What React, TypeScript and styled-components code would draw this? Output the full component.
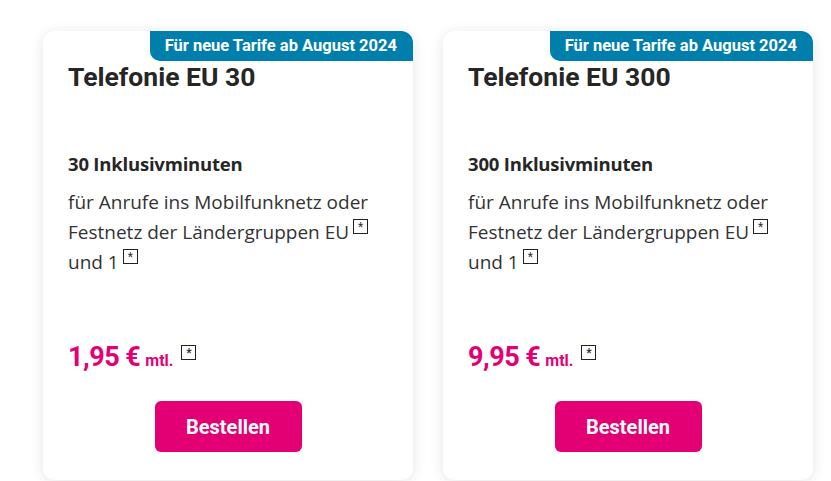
import React from 'react';
import styled, { createGlobalStyle } from 'styled-components';

const GlobalStyle = createGlobalStyle`
  body {
    margin: 0;
    background: #ffffff;
    font-family: Roboto, "Liberation Sans", sans-serif;
    color: #262626;
  }
`;

const Page = styled.div`
  display: flex;
  gap: 30px;
  padding: 31px 0 0 43px;
  height: 481px;
  box-sizing: border-box;
  overflow: hidden;
`;

const Card = styled.div`
  width: 370px;
  height: 449px;
  box-sizing: border-box;
  background: #fff;
  border-radius: 12px;
  box-shadow: 0 2px 14px rgba(0, 0, 0, 0.1);
  display: flex;
  flex-direction: column;
  padding: 0 0 28px 0;
`;

const Badge = styled.div`
  align-self: flex-end;
  background: #007fad;
  color: #fff;
  font-weight: 700;
  font-size: 16.5px;
  height: 30px;
  line-height: 30px;
  padding: 0 16px 0 15px;
  border-radius: 0 12px 0 10px;
`;

const Body = styled.div`
  padding: 0 25px;
  display: flex;
  flex-direction: column;
`;

const Title = styled.h2`
  margin: 0;
  font-size: 26.5px;
  line-height: 32px;
  font-weight: 700;
  color: #262626;
`;

const Minutes = styled.div`
  margin-top: 58px;
  font-family: "Open Sans", sans-serif;
  font-size: 18.5px;
  line-height: 26px;
  font-weight: 700;
  letter-spacing: -0.2px;
`;

const Text = styled.p`
  margin: 10px 0 0;
  font-family: "Open Sans", sans-serif;
  font-size: 19px;
  line-height: 30px;
  color: #333;
  font-weight: 400;
`;

const Star = styled.span`
  display: inline-block;
  width: 13px;
  height: 13px;
  border: 1px solid #222;
  font-family: Roboto, sans-serif;
  font-size: 12px;
  line-height: 15px;
  text-align: center;
  vertical-align: 8px;
  margin-left: 4px;
  color: #333;
  background: #fff;
`;

const Price = styled.div`
  margin-top: 62px;
  display: flex;
  align-items: baseline;
  color: #e20074;
  font-weight: 700;
  line-height: 36px;
`;

const Amount = styled.span`
  font-size: 27px;
  letter-spacing: -0.5px;
`;

const Unit = styled.span`
  font-size: 16px;
  margin-left: 5px;
`;

const PriceStar = styled(Star)`
  margin-left: 8px;
  align-self: flex-start;
  margin-top: 6px;
`;

const Button = styled.button`
  align-self: center;
  margin-top: 22px;
  width: 147px;
  height: 51px;
  border: none;
  border-radius: 6px;
  background: #e20074;
  color: #fff;
  font-family: Roboto, "Liberation Sans", sans-serif;
  font-size: 20px;
  font-weight: 700;
  cursor: pointer;
`;

const tariffs = [
  { name: 'Telefonie EU 30', minutes: 30, price: '1,95 €' },
  { name: 'Telefonie EU 300', minutes: 300, price: '9,95 €' },
];

const App: React.FC = () => (
  <>
    <GlobalStyle />
    <Page>
      {tariffs.map((t) => (
        <Card key={t.name}>
          <Badge>Für neue Tarife ab August 2024</Badge>
          <Body>
            <Title>{t.name}</Title>
            <Minutes>{t.minutes} Inklusivminuten</Minutes>
            <Text>
              für Anrufe ins Mobilfunknetz oder
              <br />
              Festnetz der Ländergruppen EU<Star>*</Star>
              <br />
              und 1<Star>*</Star>
            </Text>
            <Price>
              <Amount>{t.price}</Amount>
              <Unit>mtl.</Unit>
              <PriceStar>*</PriceStar>
            </Price>
            <Button>Bestellen</Button>
          </Body>
        </Card>
      ))}
    </Page>
  </>
);

export default App;
